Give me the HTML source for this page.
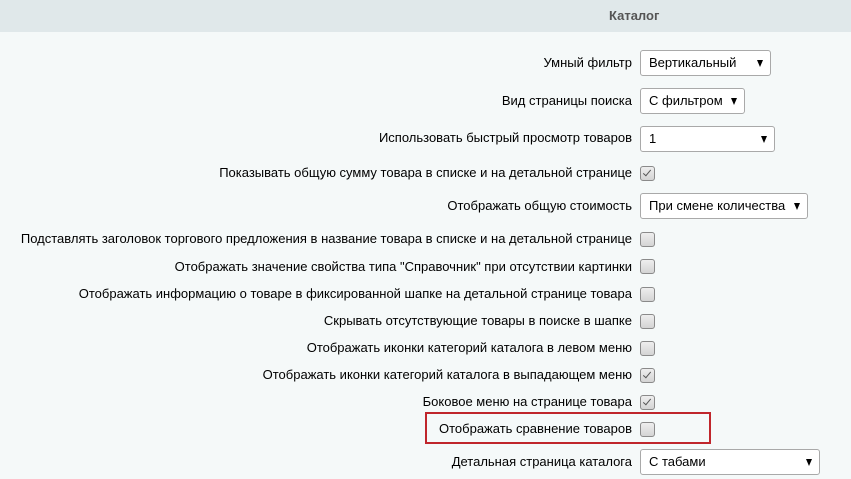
<!DOCTYPE html><html><head><meta charset="utf-8"><style>
body{margin:0;width:851px;height:479px;background:#f5f9f9;font-family:"Liberation Sans",Arial,sans-serif;font-size:13px;color:#000;position:relative;overflow:hidden}
.hd{position:absolute;left:0;top:0;width:851px;height:32px;background:#e0e8ea}
.hd span{position:absolute;left:609px;top:8px;font-weight:bold;color:#555;font-size:13px}
.l{position:absolute;right:219px;white-space:nowrap;line-height:16px}
.s{position:absolute;left:640px;border:1px solid #a9a9a9;border-radius:3px;background:#fff;box-sizing:border-box;height:26px;padding-left:8px;line-height:24px}
.s:after{content:"";position:absolute;right:7px;top:9px;border-left:3px solid transparent;border-right:3px solid transparent;border-top:7px solid #000}
.c{position:absolute;left:640px;width:13px;height:13px;border:1px solid #8a8a8a;border-radius:3px;background:linear-gradient(#eeeeee,#d4d4d4)}
.c.k:after{content:"";position:absolute;left:4px;top:1px;width:3px;height:7px;border-right:1.5px solid #555;border-bottom:1.5px solid #555;transform:rotate(40deg)}
.r{position:absolute;left:425px;top:412px;width:282px;height:28px;border:2px solid #c0262c}
</style></head><body>
<div class="hd"><span>Каталог</span></div>
<div class="l" style="top:55px">Умный фильтр</div><div class="s" style="top:50px;width:131px">Вертикальный</div>
<div class="l" style="top:93px">Вид страницы поиска</div><div class="s" style="top:88px;width:105px">С фильтром</div>
<div class="l" style="top:130px">Использовать быстрый просмотр товаров</div><div class="s" style="top:126px;width:135px">1</div>
<div class="l" style="top:165px">Показывать общую сумму товара в списке и на детальной странице</div><div class="c k" style="top:166px"></div>
<div class="l" style="top:198px">Отображать общую стоимость</div><div class="s" style="top:193px;width:168px">При смене количества</div>
<div class="l" style="top:231px">Подставлять заголовок торгового предложения в название товара в списке и на детальной странице</div><div class="c" style="top:232px"></div>
<div class="l" style="top:259px">Отображать значение свойства типа "Справочник" при отсутствии картинки</div><div class="c" style="top:259px"></div>
<div class="l" style="top:286px">Отображать информацию о товаре в фиксированной шапке на детальной странице товара</div><div class="c" style="top:287px"></div>
<div class="l" style="top:313px">Скрывать отсутствующие товары в поиске в шапке</div><div class="c" style="top:314px"></div>
<div class="l" style="top:340px">Отображать иконки категорий каталога в левом меню</div><div class="c" style="top:341px"></div>
<div class="l" style="top:367px">Отображать иконки категорий каталога в выпадающем меню</div><div class="c k" style="top:368px"></div>
<div class="l" style="top:394px">Боковое меню на странице товара</div><div class="c k" style="top:395px"></div>
<div class="r"></div>
<div class="l" style="top:421px">Отображать сравнение товаров</div><div class="c" style="top:422px"></div>
<div class="l" style="top:454px">Детальная страница каталога</div><div class="s" style="top:449px;width:180px">С табами</div>
</body></html>
